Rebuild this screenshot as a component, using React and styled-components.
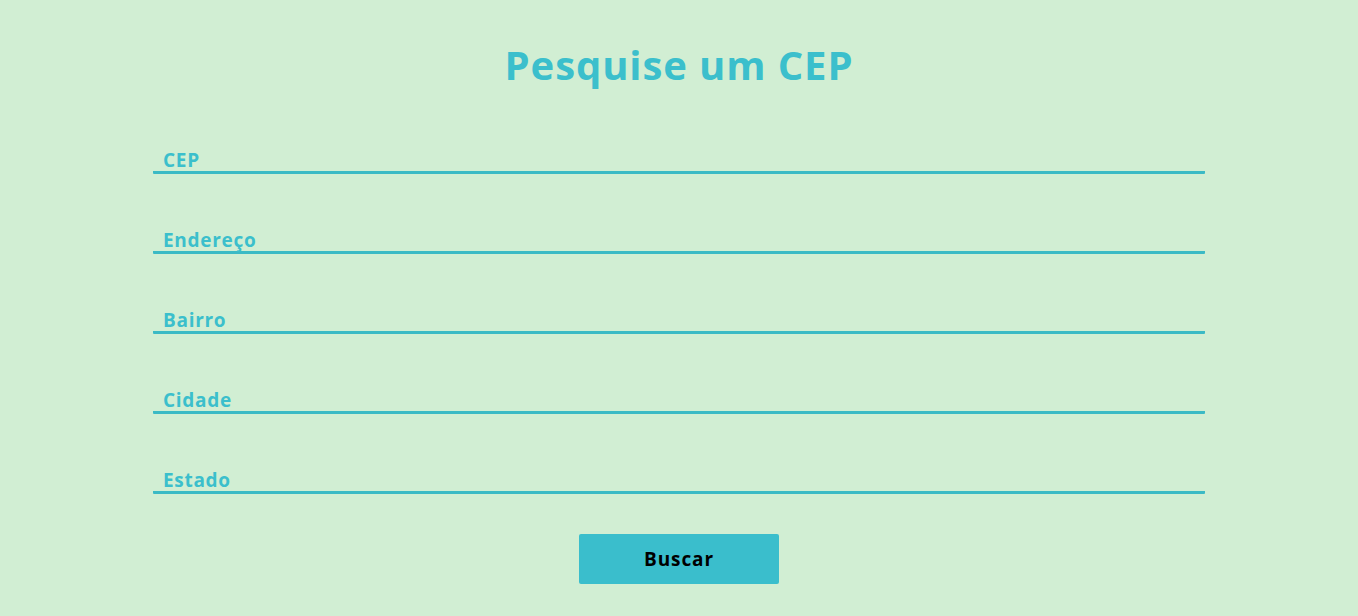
import React from "react";
import styled, { createGlobalStyle } from "styled-components";

const Global = createGlobalStyle`
  html, body { margin: 0; padding: 0; background: #d1eed3; }
  body { font-family: "Open Sans", "Noto Sans", sans-serif; }
  * { box-sizing: border-box; }
`;

const Page = styled.main`
  min-height: 616px;
  background: #d1eed3;
  display: flex;
  flex-direction: column;
  align-items: center;
  padding-top: 39px;
`;

const Title = styled.h1`
  margin: 0;
  font-size: 40px;
  line-height: 52px;
  font-weight: 700;
  color: #3bbfcc;
  letter-spacing: 0.9px;
`;

const Form = styled.form`
  width: 1052px;
  display: flex;
  flex-direction: column;
  margin-top: 3px;
`;

const Field = styled.label`
  height: 80px;
  display: flex;
  align-items: flex-end;
`;

const Line = styled.div`
  width: 100%;
  border-bottom: 3px solid #3bbac5;
  padding: 0 0 1px 10px;
  border-radius: 1px;
`;

const Label = styled.span`
  display: block;
  font-size: 19px;
  line-height: 20px;
  font-weight: 700;
  color: #3bbfcc;
  letter-spacing: 0.7px;
`;

const Button = styled.button`
  align-self: center;
  margin-top: 40px;
  width: 200px;
  height: 50px;
  border: none;
  border-radius: 2px;
  background: #3abecc;
  color: #000;
  font-family: "Open Sans", "Noto Sans", sans-serif;
  font-size: 19px;
  font-weight: 700;
  letter-spacing: 0.9px;
  cursor: pointer;
`;

const fields = ["CEP", "Endereço", "Bairro", "Cidade", "Estado"];

export default function App() {
  return (
    <>
      <Global />
      <Page>
        <Title>Pesquise um CEP</Title>
        <Form onSubmit={(e) => e.preventDefault()}>
          {fields.map((f) => (
            <Field key={f}>
              <Line>
                <Label>{f}</Label>
              </Line>
            </Field>
          ))}
          <Button type="submit">Buscar</Button>
        </Form>
      </Page>
    </>
  );
}
